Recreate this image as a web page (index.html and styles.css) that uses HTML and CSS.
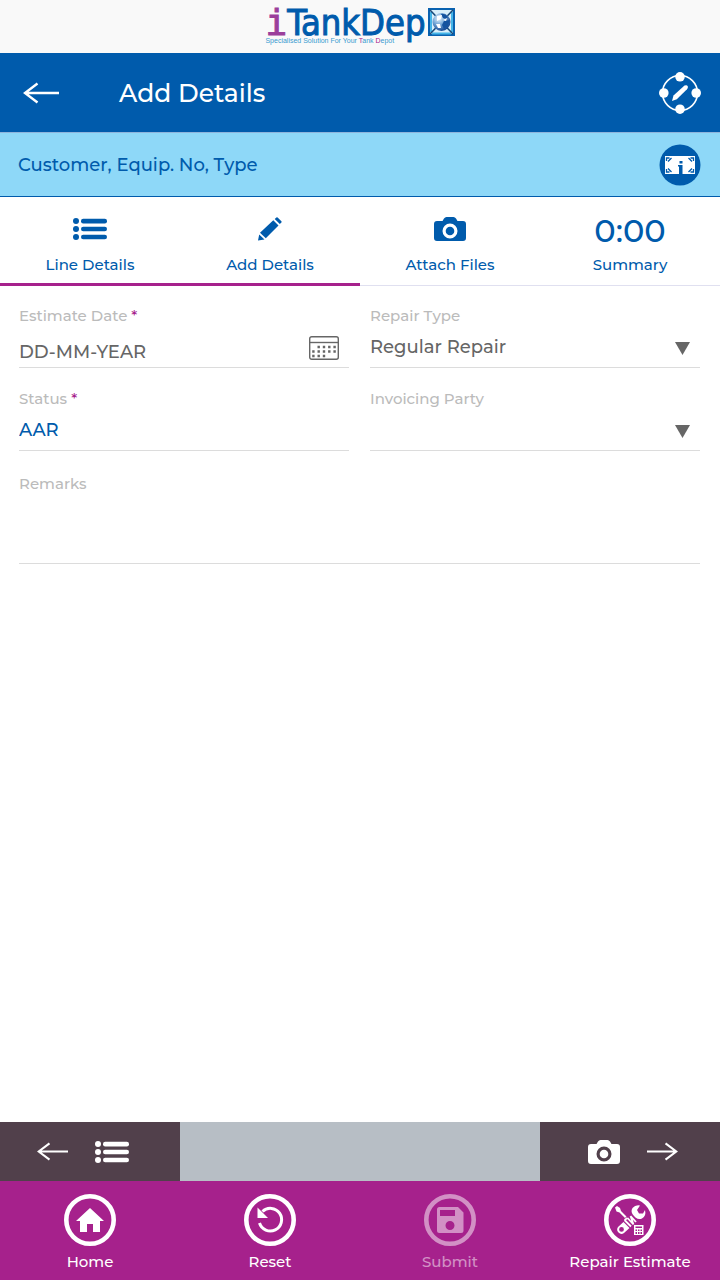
FILE: index.html
```html
<!DOCTYPE html>
<html lang="en">
<head>
<meta charset="utf-8">
<meta name="viewport" content="width=device-width, initial-scale=1">
<title>iTankDepo - Add Details</title>
<link rel="stylesheet" href="styles.css">
</head>
<body>
<svg class="sprite" aria-hidden="true">
  <symbol id="list" viewBox="0 0 34 22">
    <circle cx="3" cy="3" r="3"/><circle cx="3" cy="11" r="3"/><circle cx="3" cy="19" r="3"/>
    <rect x="8" y=".8" width="26" height="4.600" rx="2.200"/><rect x="8" y="8.700" width="26" height="4.600" rx="2.200"/><rect x="8" y="16.700" width="26" height="4.600" rx="2.200"/>
  </symbol>
  <symbol id="camera" viewBox="0 0 32 24">
    <path fill-rule="evenodd" d="M3 4H8.500L10 1.500Q11 0 12.500 0H19.500Q21 0 22 1.500L23.500 4H29Q32 4 32 7V21Q32 24 29 24H3Q0 24 0 21V7Q0 4 3 4ZM16 6.500A7.500 7.500 0 1 0 16 21.500A7.500 7.500 0 1 0 16 6.500Z"/>
    <circle cx="16" cy="14" r="4.300"/>
  </symbol>
  <symbol id="arrow" viewBox="0 0 36 22">
    <path d="M36 11H2M14.500 1.500L2 11L14.500 20.500" fill="none" stroke="currentColor" stroke-width="2.400"/>
  </symbol>
</svg>
<div class="app">
  <div class="brand">
    <div class="brand-text">
      <div class="brand-name"><span class="brand-i">i</span>TankDep</div>
      <div class="brand-tag">Specialised Solution For Your <span class="accent">T</span>ank <span class="accent">D</span>epot</div>
    </div>
    <svg class="brand-globe" viewBox="0 0 27 28" role="img" aria-label="o">
      <defs><radialGradient id="globe" cx=".35" cy=".3" r=".75"><stop offset="0" stop-color="#e8f4fc"/><stop offset=".45" stop-color="#75a8d8"/><stop offset="1" stop-color="#0c3f8c"/></radialGradient></defs>
      <rect x="1" y="1" width="25" height="26" fill="#d9effa" stroke="#0a62b0" stroke-width="2"/>
      <path d="M3 4V24M24 4V24M4 25.500H23" stroke="#45b5e8" stroke-width="2"/>
      <path d="M2 2L25 26M25 2L2 26" stroke="#174a7a" stroke-width="1.600"/>
      <circle cx="13.500" cy="14" r="9" fill="url(#globe)"/>
      <path d="M13 6Q17 5 20 9L18 11L15 10ZM16 13L22 12L20 18L16 21L14 17Z" fill="#14539f"/>
      <path d="M9 8L14 7L13 11L9 13ZM15 12L19 10L18 13ZM8 16L12 16L13 20L10 20Z" fill="#fff"/>
    </svg>
  </div>

  <header class="header">
    <button class="icon-button" aria-label="Back"><svg class="back-icon"><use href="#arrow"/></svg></button>
    <h1 class="title">Add Details</h1>
    <button class="icon-button" aria-label="Edit">
      <svg class="edit-icon" viewBox="0 0 42 42">
        <circle cx="21" cy="21" r="17.500" fill="none" stroke="#fff" stroke-width="1.600"/>
        <g fill="#fff"><circle cx="21" cy="4.800" r="4.800"/><circle cx="21" cy="37.200" r="4.800"/><circle cx="4.800" cy="21" r="4.800"/><circle cx="37.200" cy="21" r="4.800"/>
        <path d="M13 29L14.500 23.500L25.500 13.600Q28 12.500 28.800 14.500Q29.200 16 28 17.200L17.800 27.300Z"/></g>
      </svg>
    </button>
  </header>

  <div class="equipment">
    <span>Customer, Equip. No, Type</span>
    <button class="icon-button" aria-label="Information">
      <svg class="info-icon" viewBox="0 0 42 42">
        <circle cx="21" cy="21" r="20.500" fill="#005bac"/>
        <rect x="6" y="12" width="30" height="18" fill="#fff"/>
        <path d="M7.500 17V14H10.500M12.500 14L9 17.500M34.500 17V14H31.500M29.500 14L33 17.500M7.500 25V28H10.500M12.500 28L9 24.500M34.500 25V28H31.500M29.500 28L33 24.500" fill="none" stroke="#005bac" stroke-width="1.300"/>
        <path d="M20.500 17H23.500V19.500H20.500ZM19 21H23.500V31H20V22.500H19Z" fill="#005bac"/>
      </svg>
    </button>
  </div>

  <nav class="tabs" aria-label="Sections">
    <a class="tab tab-done" href="#line"><span class="tab-icon"><svg class="list-icon"><use href="#list"/></svg></span>Line Details</a>
    <a class="tab tab-done" href="#add" aria-current="page"><span class="tab-icon">
      <svg class="pencil-icon" viewBox="0 0 24 24"><path d="M0 23.500L1.200 17.500L6.500 22.500ZM2 15.800L15.300 3.200L20.500 8.400L7.800 21.200ZM16.700 2L18.400 .500Q19 0 19.600 .500L23.400 4.300Q24 5 23.400 5.600L21.800 7.100Z"/></svg></span>Add Details</a>
    <a class="tab" href="#files"><span class="tab-icon"><svg class="camera-icon"><use href="#camera"/></svg></span>Attach Files</a>
    <a class="tab" href="#summary"><span class="tab-icon tab-total">0:00</span>Summary</a>
  </nav>

  <main class="form">
    <div class="field">
      <label for="date">Estimate Date <span class="accent">*</span></label>
      <div class="control control-date">
        <input id="date" type="text" value="DD-MM-YEAR">
        <button class="icon-button calendar-button" aria-label="Choose date">
          <svg class="calendar-icon" viewBox="0 0 30 24"><rect x=".7" y=".7" width="28.600" height="22.600" rx="2" fill="none" stroke="#666" stroke-width="1.400"/><path d="M1 6.500H29" stroke="#666" stroke-width="1.400"/><path d="M8.500 11H28M3.200 15.500H28M3.200 20H17" stroke="#666" stroke-width="2.400" stroke-dasharray="2.400 2.900"/></svg>
        </button>
      </div>
    </div>
    <div class="field">
      <label for="repair">Repair Type</label>
      <div class="control">
        <select id="repair"><option>Regular Repair</option></select>
        <svg class="caret" viewBox="0 0 15 13"><path d="M0 0H15L7.500 13Z"/></svg>
      </div>
    </div>
    <div class="field">
      <label for="status">Status <span class="accent">*</span></label>
      <div class="control"><input class="status" id="status" type="text" value="AAR"></div>
    </div>
    <div class="field">
      <label for="party">Invoicing Party</label>
      <div class="control">
        <select id="party"><option></option></select>
        <svg class="caret" viewBox="0 0 15 13"><path d="M0 0H15L7.500 13Z"/></svg>
      </div>
    </div>
    <div class="field field-wide">
      <label for="remarks">Remarks</label>
      <textarea id="remarks"></textarea>
    </div>
  </main>

  <div class="pager">
    <button class="pager-button" aria-label="Previous: Line Details"><svg class="pager-arrow"><use href="#arrow"/></svg><svg class="list-icon"><use href="#list"/></svg></button>
    <button class="pager-button" aria-label="Next: Attach Files"><svg class="camera-icon"><use href="#camera"/></svg><svg class="pager-arrow flipped"><use href="#arrow"/></svg></button>
  </div>

  <footer class="actions">
    <button class="action">
      <svg class="action-icon" viewBox="0 0 52 52"><circle cx="26" cy="26" r="23.700"/><path class="solid" d="M26 14L40 27H36V38H29V30H23V38H16V27H12Z"/></svg>Home</button>
    <button class="action">
      <svg class="action-icon" viewBox="0 0 52 52"><circle cx="26" cy="26" r="23.700"/><path class="line" d="M18.500 17.500A11.300 11.300 0 1 1 15.500 29"/><path class="solid" d="M13.500 13.500V24H24Z"/></svg>Reset</button>
    <button class="action" disabled>
      <svg class="action-icon" viewBox="0 0 52 52"><circle cx="26" cy="26" r="23.700"/><path class="solid" fill-rule="evenodd" d="M15.500 13H34L39.500 18.500V36.500Q39.500 39 37 39H15.500Q13 39 13 36.500V15.500Q13 13 15.500 13ZM16 16V22H31V16ZM26 27A4.500 4.500 0 1 0 26 36A4.500 4.500 0 1 0 26 27Z"/></svg>Submit</button>
    <button class="action">
      <svg class="action-icon" viewBox="0 0 52 52"><circle cx="26" cy="26" r="23.700"/>
        <path class="solid" d="M11 13.500L13 12L16 14L17 17L22.500 22.500L21 24L15.500 18.500L12.500 17.500Z"/>
        <path class="solid" d="M36 11.500L33 16L35 19.500H39L41 16Q42.500 22 38 24.500Q34.500 26 31.500 23.500L30 22Q26 18 28.500 14Q31.500 10.500 36 11.500Z"/>
        <path class="solid" fill-rule="evenodd" d="M19.500 28L25.500 34L20 39Q17 41 14.500 38.500Q12 36 14 33ZM17.500 33A2.400 2.400 0 1 0 17.500 37.800A2.400 2.400 0 1 0 17.500 33Z"/>
        <path class="thin" d="M20.500 26L27 32.500M23.500 24L29.500 30.500M26.500 22L32 28M20.500 26L23.500 24M26.500 22L29.500 30.500"/>
        <path class="solid" fill-rule="evenodd" d="M30 31H39.500V41H30ZM31.500 32.500V34H38V32.500ZM31.500 35.500V37H33V35.500ZM34 35.500V37H35.500V35.500ZM36.500 35.500V37H38V35.500ZM31.500 38V40H33V38ZM34 38V40H35.500V38ZM36.500 38V40H38V38Z"/>
      </svg>Repair Estimate</button>
  </footer>
</div>
</body>
</html>
```

FILE: styles.css
```css
* { box-sizing: border-box; }

body {
  margin: 0;
  background: #fff;
  color: #005bac;
  font-family: Montserrat, Inter, sans-serif;
  font-weight: 500;
}

button, input, select, textarea {
  margin: 0;
  padding: 0;
  border: 0;
  border-radius: 0;
  background: none;
  color: inherit;
  font: inherit;
}

svg { display: block; fill: currentColor; }
.sprite { position: absolute; width: 0; height: 0; }
.accent { color: #a6218c; }
.icon-button { flex: none; cursor: pointer; }

.app {
  display: flex;
  flex-direction: column;
  min-height: 100vh;
}

.brand {
  display: flex;
  justify-content: center;
  gap: 2px;
  height: 53px;
  padding-top: 8px;
  background: #f9f9f9;
}
.brand-name {
  display: flex;
  height: 29px;
  font-family: "DejaVu Sans Condensed", "DejaVu Sans", sans-serif;
  font-stretch: condensed;
  font-size: 36px;
  font-weight: 400;
  line-height: 29px;
  -webkit-text-stroke: 1px currentColor;
}
.brand-i { color: #9b3f9b; font-family: "DejaVu Sans Mono", monospace; }
.brand-tag {
  color: #3a9bd0;
  font-family: "Liberation Sans", sans-serif;
  font-size: 7px;
  line-height: 8px;
}
.brand-globe { width: 27px; height: 28px; }

.header {
  display: flex;
  align-items: center;
  height: 80px;
  padding: 0 19px 0 23px;
  border-bottom: 1px solid #8fb4dc;
  background: #005bac;
  color: #fff;
}
.back-icon { width: 36px; height: 22px; }
.title {
  flex: 1;
  margin: 0 0 0 60px;
  font-size: 25px;
  font-weight: 500;
}
.edit-icon { width: 42px; height: 42px; }

.equipment {
  display: flex;
  align-items: center;
  justify-content: space-between;
  height: 64px;
  padding: 0 19px 0 18px;
  border-bottom: 1px solid #005bac;
  background: #8ed8f8;
  font-size: 18px;
}
.info-icon { width: 42px; height: 42px; }

.tabs {
  display: grid;
  grid-template-columns: repeat(4, 1fr);
  height: 89px;
  box-shadow: inset 0 -1px #e0e0f0;
}
.tab {
  display: flex;
  flex-direction: column;
  align-items: center;
  padding-top: 12px;
  color: inherit;
  font-size: 15px;
  line-height: 20px;
  text-decoration: none;
}
.tab-done { border-bottom: 3px solid #a6218c; }
.tab-icon {
  display: flex;
  align-items: center;
  height: 40px;
  margin-bottom: 6px;
}
.tab-total { padding-top: 4px; font-size: 32px; }
.list-icon { width: 34px; height: 22px; }
.camera-icon { width: 32px; height: 24px; }
.pencil-icon { width: 24px; height: 24px; }

.form {
  display: grid;
  flex: 1;
  grid-template-columns: 1fr 1fr;
  gap: 21px;
  align-content: start;
  padding: 20px 20px 20px 19px;
  color: #666;
}
.field {
  display: flex;
  flex-direction: column;
  min-width: 0;
}
.field-wide { grid-column: 1 / -1; padding-top: 2px; }
.field label {
  color: #bbb;
  font-size: 15px;
  line-height: 20px;
}
.control {
  position: relative;
  display: flex;
  align-items: center;
  height: 42px;
  border-bottom: 1px solid #dcdcdc;
}
.control-date { padding: 10px 10px 0 0; }
.calendar-button { padding-bottom: 7px; }
.control input, .control select {
  flex: 1;
  min-width: 0;
  font-size: 18px;
  line-height: 24px;
}
.control select { appearance: none; align-self: stretch; }
.control .status { color: #005bac; }
.caret {
  position: absolute;
  right: 10px;
  bottom: 12px;
  width: 15px;
  height: 13px;
  pointer-events: none;
}
.calendar-icon { width: 30px; height: 24px; }
.field textarea {
  height: 70px;
  border-bottom: 1px solid #dcdcdc;
  resize: none;
}

.pager {
  display: grid;
  grid-template-columns: 1fr 1fr;
  height: 59px;
  background: #b7bec5;
}
.pager-button {
  display: flex;
  align-items: center;
  justify-content: center;
  gap: 27px;
  width: 50%;
  background: #51404b;
  color: #fff;
}
.pager-button:last-child { justify-self: end; padding-left: 6px; }
.pager-button:first-child { padding-right: 15px; }
.pager-arrow { width: 31px; height: 19px; }
.flipped { transform: scaleX(-1); }

.actions {
  display: grid;
  grid-template-columns: repeat(4, 1fr);
  height: 99px;
  background: #a6218c;
  color: #fff;
}
.action {
  display: flex;
  flex-direction: column;
  align-items: center;
  gap: 6px;
  padding-top: 13px;
  font-size: 15px;
  line-height: 20px;
}
.action:disabled { opacity: .5; }
.action-icon { width: 52px; height: 52px; fill: none; stroke: #fff; stroke-width: 4.600; }
.action-icon .solid { fill: #fff; stroke: none; }
.action-icon .line { stroke-width: 3; }
.action-icon .thin { stroke-width: 1.800; }
```
